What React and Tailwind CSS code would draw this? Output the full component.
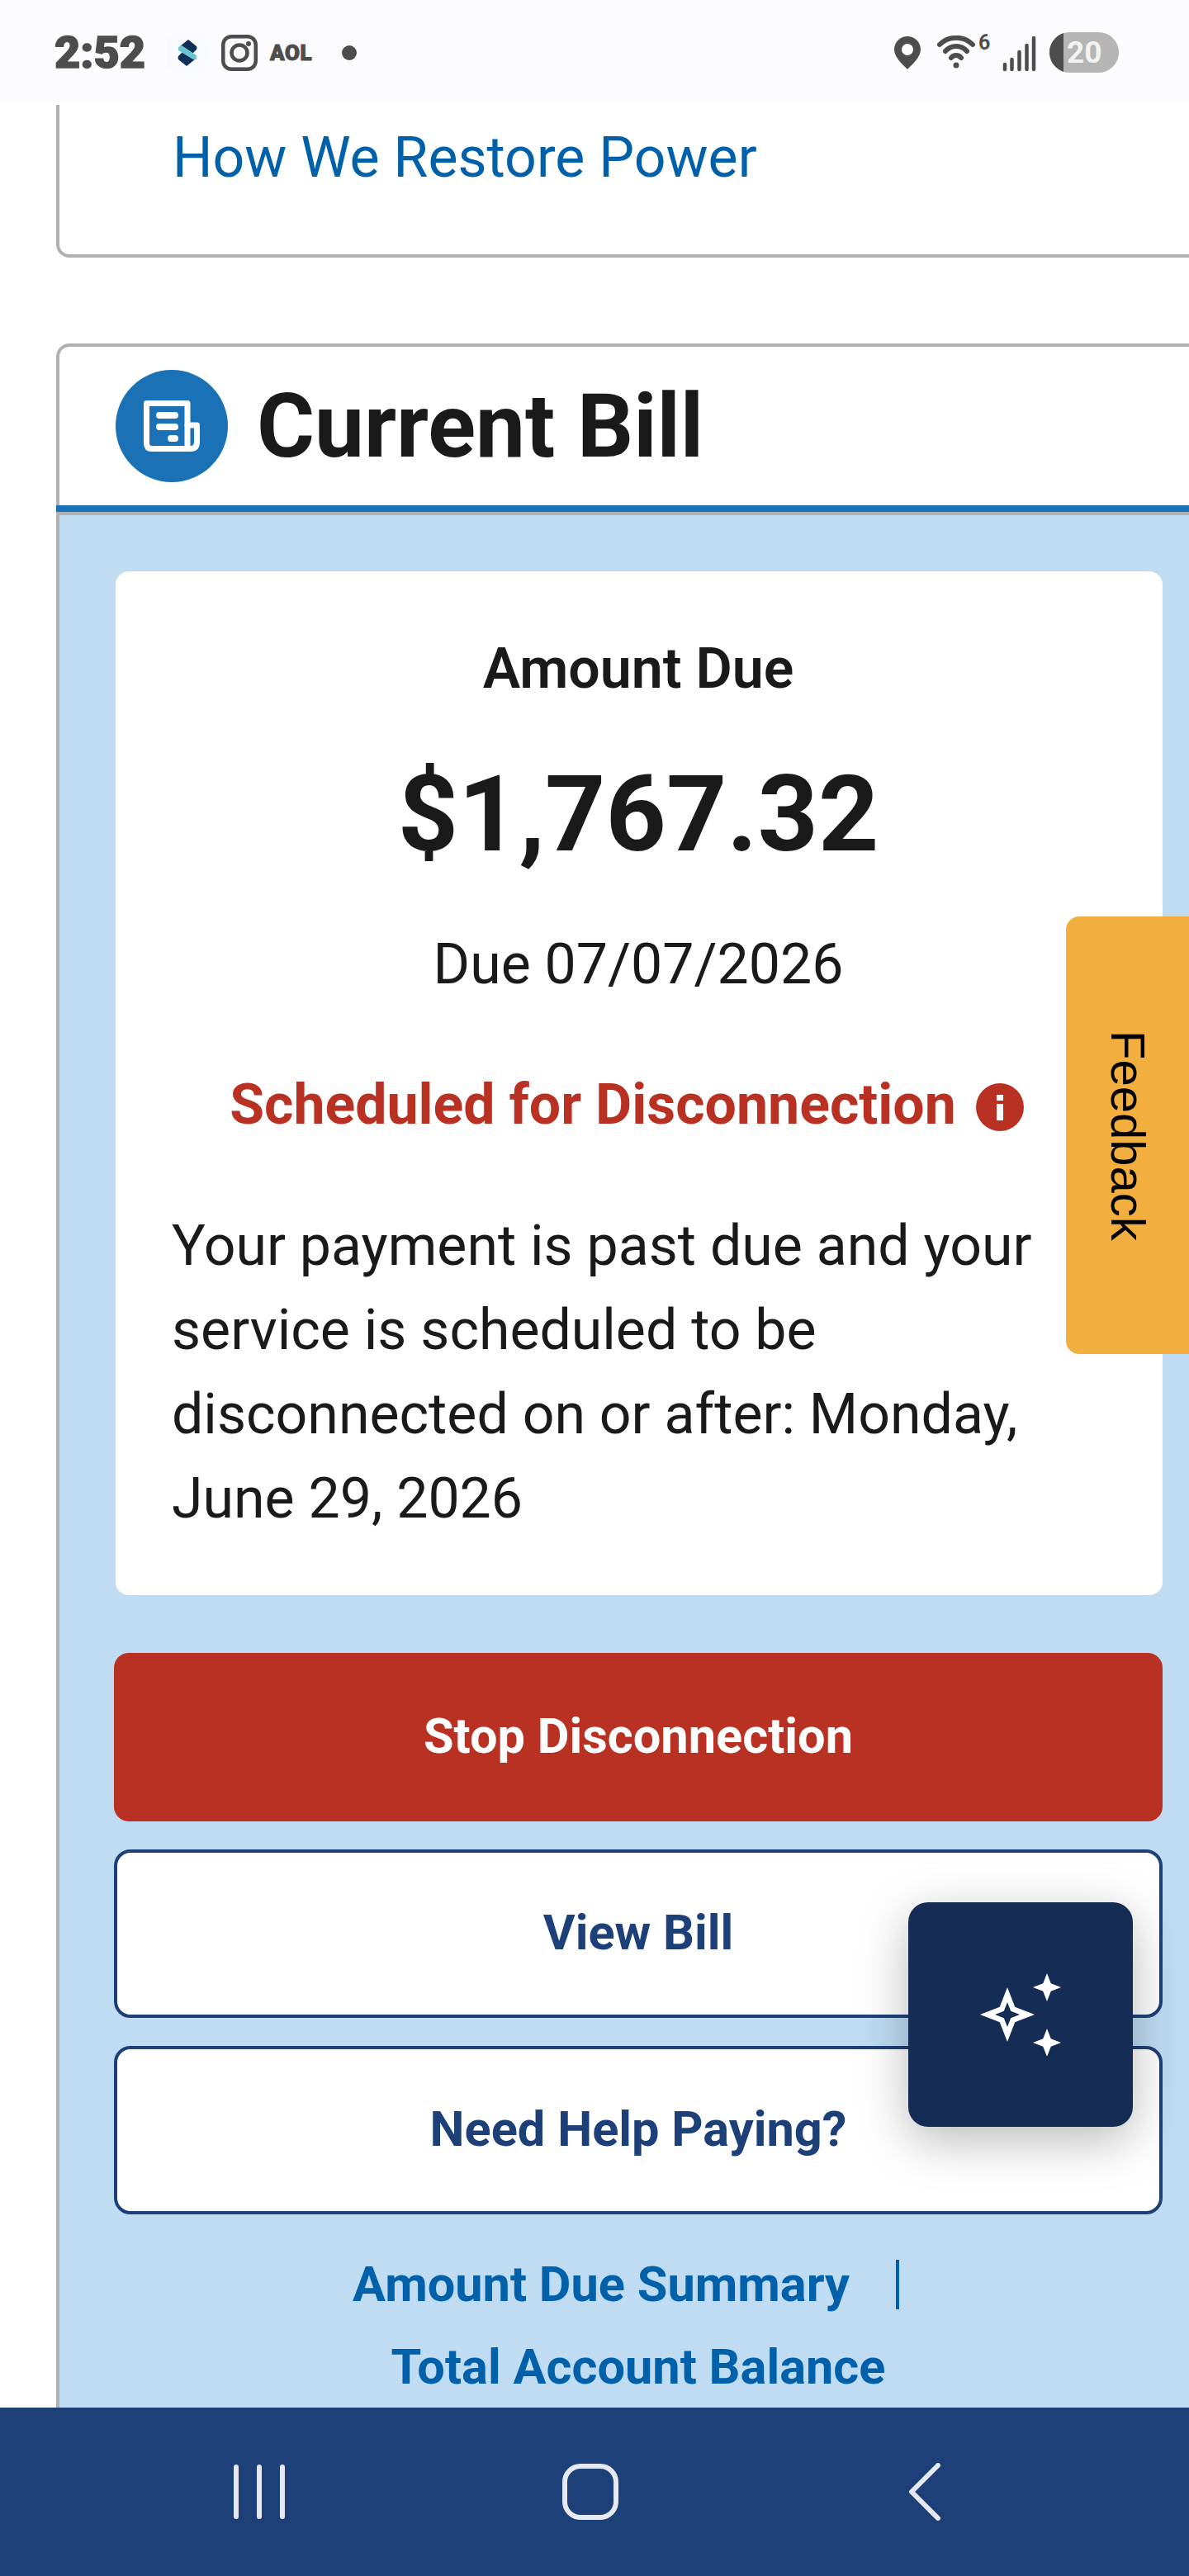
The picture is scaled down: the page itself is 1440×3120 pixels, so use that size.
import React from 'react';

// four pointed star used by the assistant button
function star(cx, cy, r) {
  const k = r * 0.28;
  return `M${cx} ${cy - r}L${cx + k} ${cy - k}L${cx + r} ${cy}L${cx + k} ${cy + k}L${cx} ${cy + r}L${cx - k} ${cy + k}L${cx - r} ${cy}L${cx - k} ${cy - k}Z`;
}

function StatusBar() {
  return (
    <div className="h-[127px] shrink-0 bg-[#fcfcfe] flex items-center justify-between pl-[66px] pr-[85px] text-[#4d4d4d]">
      <div className="flex items-center">
        <span className="text-[54px] leading-none font-black w-[136px] font-['Roboto',sans-serif] [-webkit-text-stroke:1.5px_#4d4d4d]">2:52</span>
        <div className="w-[50px] h-[50px] rounded-[14px] bg-[#f9fafc] flex items-center justify-center">
          <svg width="24" height="32" viewBox="0 0 24 32">
            <path d="M13 0L23 8Q24 10 23 12L18 17L3 8Z" fill="#0f2f57" />
            <path d="M11 32L1 24Q0 22 1 20L6 15L21 24Z" fill="#0f2f57" />
            <path d="M1 9L5 7L23 19L23 24L19 24L1 13Z" fill="#6cc6d2" />
          </svg>
        </div>
        <svg className="ml-[16px]" width="44" height="44" viewBox="0 0 44 44" fill="none" stroke="#4d4d4d" strokeWidth="4.500">
          <rect x="2.250" y="2.250" width="39.500" height="39.500" rx="10" />
          <circle cx="22" cy="22" r="9.500" />
          <circle cx="33" cy="11" r="3" fill="#4d4d4d" stroke="none" />
        </svg>
        <span className="ml-[15px] w-[87px] text-[26px] tracking-[0.5px] leading-none font-black font-['Roboto',sans-serif] [-webkit-text-stroke:1px_#4d4d4d]">AOL</span>
        <div className="w-[18px] h-[18px] rounded-full bg-[#4d4d4d]" />
      </div>
      <div className="flex items-center">
        <svg width="32" height="40" viewBox="0 0 32 40">
          <path fillRule="evenodd" d="M16 0C7 0 0 7 0 16C0 25 10 34 16 40C22 34 32 25 32 16C32 7 25 0 16 0ZM16 9A7 7 0 1 1 16 23A7 7 0 1 1 16 9Z" fill="#4d4d4d" />
        </svg>
        <svg className="ml-[20px] mb-[2px]" width="46" height="40" viewBox="0 0 46 40" fill="none" stroke="#4d4d4d" strokeWidth="6" strokeLinecap="round">
          <path d="M3 11C14 0 32 0 43 11" />
          <path d="M10 19C17 11 29 11 36 19" />
          <path d="M17 27C20 23 26 23 29 27" />
          <circle cx="23" cy="36" r="3.500" fill="#4d4d4d" stroke="none" />
        </svg>
        <span className="ml-[4px] mb-[24px] w-[13px] text-[25px] leading-none font-bold font-['Roboto',sans-serif]">6</span>
        <svg className="ml-[16px] mt-[2px]" width="41" height="44" viewBox="0 0 41 44" fill="none" stroke="#4d4d4d" strokeWidth="4.500" strokeLinecap="round">
          <path d="M3 41V35" />
          <path d="M11.500 41V29" />
          <path d="M20.500 41V20" />
          <path d="M29.500 41V12" />
          <path d="M38 41V3" />
        </svg>
        <div className="ml-[16px] w-[84px] h-[49px] rounded-full bg-[#b5b5b5] overflow-hidden flex items-center">
          <div className="w-[17px] h-full bg-[#4d4d4d]" />
          <span className="ml-[4px] text-[37px] leading-none font-bold text-[#f2f2f2] font-['Roboto',sans-serif]">20</span>
        </div>
      </div>
    </div>
  );
}

function App() {
  return (
    <div className="relative w-[1440px] h-[3120px] overflow-hidden flex flex-col bg-white text-[#1a1a1a] font-['Roboto',sans-serif]">
      <StatusBar />

      <main className="flex-1 overflow-hidden">
        {/* Previous card, scrolled mostly out of view */}
        <div className="-mr-[40px] h-[185px] ml-[68px] border-4 border-t-0 border-[#b0b0b0] rounded-b-[16px] pl-[137px] pt-[13px]">
          <a href="#" className="block text-[68px] leading-[102px] text-[#0060a9]">How We Restore Power</a>
        </div>

        {/* Current bill card */}
        <section className="mt-[104px] -mr-[40px] ml-[68px] border-4 border-b-0 border-[#b0b0b0] rounded-t-[16px]">
          <header className="h-[192px] flex items-center gap-[35px] pl-[68px]">
            <div className="w-[136px] h-[136px] rounded-full bg-[#1b71b5] flex items-center justify-center">
              <svg width="68" height="62" viewBox="0 0 68 62" fill="none" stroke="#fff" strokeWidth="7" strokeLinejoin="round" strokeLinecap="round">
                <path d="M3.500 3.500H53V58.500H10Q3.500 58.500 3.500 52Z" />
                <path d="M53 30H64.500V50Q64.500 58.500 57 58.500H50" />
                <path d="M19 18H38M19 32H38M33 46H38" strokeWidth="8" />
              </svg>
            </div>
            <h2 className="text-[107px] leading-none font-bold">Current Bill</h2>
          </header>
          <div className="h-[8px] bg-[#1b71b5] -ml-[4px]" />
          <div className="h-[4px] bg-[#b0b0b0]" />

          <div className="bg-[#bfdcf3] pt-[68px] pl-[66px] pr-[68px] pb-[80px]">
            <div className="h-[1240px] ml-[2px] bg-white rounded-[16px] pl-[68px] pr-[70px] pt-[86px]">
              <p className="text-center text-[68px] leading-[64px] font-semibold">Amount Due</p>
              <p className="mt-[80px] text-center text-[128px] leading-[128px] font-bold">$1,767.32</p>
              <p className="mt-[86px] text-center text-[68px] leading-[64px]">Due 07/07/2026</p>
              <div className="mt-[106px] pr-[28px] flex items-center justify-center gap-[24px] text-[#b93122]">
                <span className="text-[68px] leading-[64px] font-bold">Scheduled for Disconnection</span>
                <svg className="mt-[6px]" width="58" height="58" viewBox="0 0 58 58">
                  <circle cx="29" cy="29" r="29" fill="#b93122" />
                  <rect x="25" y="14" width="8" height="7" fill="#fff" />
                  <rect x="25" y="25" width="8" height="20" fill="#fff" />
                </svg>
              </div>
              <p className="mt-[88px] text-[68px] leading-[102px]">
                Your payment is past due and your service is scheduled to be disconnected on or after: Monday, June 29, 2026
              </p>
            </div>

            <button className="mt-[70px] w-full h-[204px] rounded-[18px] bg-[#b93122] text-white text-[59.500px] font-bold">Stop Disconnection</button>
            <button className="mt-[34px] block w-full h-[204px] rounded-[20px] bg-white border-4 border-[#1e4079] text-[#1e4079] text-[59.500px] font-bold">View Bill</button>
            <button className="mt-[34px] block w-full h-[204px] rounded-[20px] bg-white border-4 border-[#1e4079] text-[#1e4079] text-[59.500px] font-bold">Need Help Paying?</button>

            <div className="mt-[36px] pr-[30px] flex items-center justify-center text-[#0060a9] text-[59.500px] leading-[98px] font-bold">
              <a href="#">Amount Due Summary</a>
              <div className="ml-[56px] w-[4px] h-[60px] bg-[#0060a9]" />
            </div>
            <a href="#" className="block mt-[2px] text-center text-[#0060a9] text-[59.500px] leading-[98px] font-bold">Total Account Balance</a>
          </div>
        </section>
      </main>

      <nav className="h-[204px] shrink-0 bg-[#1e4079] flex items-center pl-[283px]">
        <svg width="62" height="68" viewBox="0 0 62 68" fill="none" stroke="#e6e9f2" strokeWidth="6" strokeLinecap="round">
          <path d="M3 4V64M31 4V64M59 4V64" />
        </svg>
        <svg className="ml-[336px]" width="68" height="68" viewBox="0 0 68 68" fill="none" stroke="#e6e9f2" strokeWidth="6">
          <rect x="3" y="3" width="62" height="62" rx="19" />
        </svg>
        <svg className="ml-[351px]" width="40" height="70" viewBox="0 0 40 70" fill="none" stroke="#e6e9f2" strokeWidth="6" strokeLinecap="round" strokeLinejoin="round">
          <path d="M36 3L4 35L36 67" />
        </svg>
      </nav>

      {/* Feedback tab */}
      <button className="absolute right-0 top-[1110px] w-[149px] h-[530px] rounded-l-[16px] bg-[#f2ae3e] flex items-center justify-center">
        <span className="[writing-mode:vertical-rl] text-[58px] leading-none text-black font-['Liberation_Sans',sans-serif]">Feedback</span>
      </button>

      {/* Assistant button */}
      <button className="absolute left-[1100px] top-[2304px] w-[272px] h-[272px] rounded-[24px] bg-[#152c54] shadow-[0_16px_60px_rgba(0,0,0,0.28)] flex items-center justify-center">
        <svg width="100" height="100" viewBox="0 0 100 100">
          <path fillRule="evenodd" d={star(34, 50, 33) + star(34, 50, 15)} fill="#fff" />
          <path d={star(82, 17, 17)} fill="#fff" />
          <path d={star(82, 84, 17)} fill="#fff" />
        </svg>
      </button>
    </div>
  );
}

export default App;
